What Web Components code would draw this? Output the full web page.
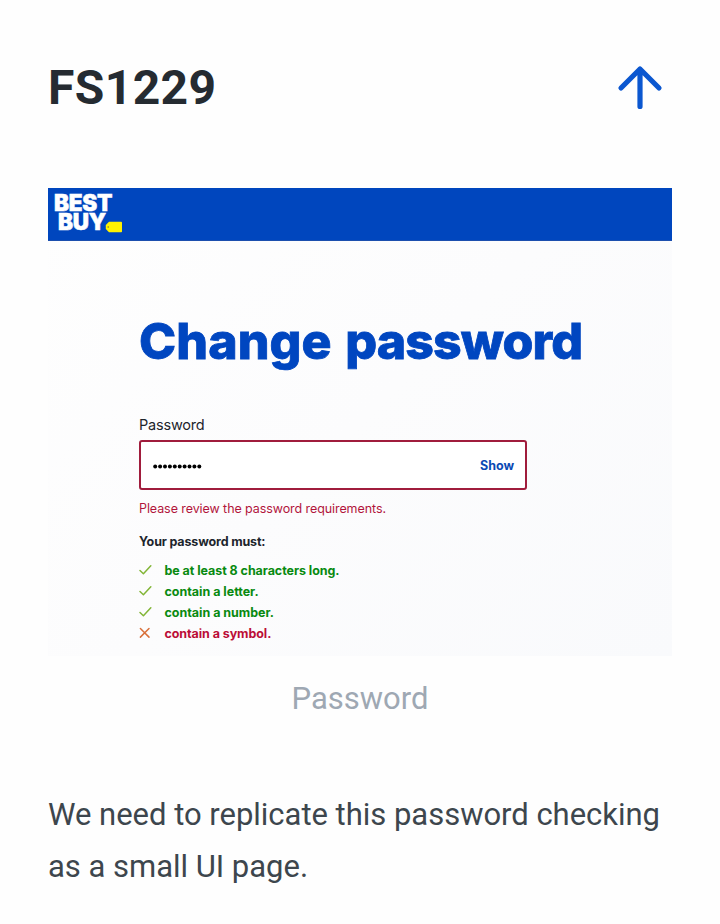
<!DOCTYPE html>
<html lang="en">
<head>
<meta charset="utf-8">
<title>FS1229</title>
<style>
body{margin:0;background:#fefefe;font-family:Roboto,"Liberation Sans",sans-serif}
</style>
</head>
<body>
<ticket-page>
  <ticket-header slot="header">FS1229</ticket-header>
  <brand-shot slot="figure">
    <password-form>
      <rule-item state="ok" style="--ls:-.06px">be at least 8 characters long.</rule-item>
      <rule-item state="ok">contain a letter.</rule-item>
      <rule-item state="ok">contain a number.</rule-item>
      <rule-item state="bad" style="--ls:-.08px">contain a symbol.</rule-item>
    </password-form>
  </brand-shot>
  <span slot="caption">Password</span>
  <span slot="text">We need to replicate this password checking as a small UI page.</span>
</ticket-page>
<script>
const define=(name,html)=>customElements.define(name,class extends HTMLElement{
  constructor(){super();this.attachShadow({mode:'open'}).innerHTML=html;}
});

define('ticket-page',`<style>
:host{display:flex;flex-direction:column;box-sizing:border-box;width:720px;height:924px;padding:0 48px;overflow:hidden}
.cap{margin-top:17px;height:52px;line-height:52px;font-size:31px;text-align:center;color:#9ea8b3}
p{margin:64px 0 0;font-size:31px;line-height:52px;color:#3d464d;letter-spacing:-.02px}
</style><slot name="header"></slot><slot name="figure"></slot><div class="cap"><slot name="caption"></slot></div><p><slot name="text"></slot></p>`);

define('ticket-header',`<style>
:host{display:flex;justify-content:space-between;align-items:center;height:176px;margin-bottom:12px;color:#252b31}
h1{margin:0;font-size:48px;line-height:56px;font-weight:700;letter-spacing:.4px}
svg{display:block;margin-right:8px}
</style><h1><slot></slot></h1>
<svg width="48" height="48" viewBox="0 0 48 48" fill="none" stroke="#0b57d0" stroke-width="5.200" stroke-linecap="round" stroke-linejoin="round"><path d="M24 42.500V5M5 24 24 5 43 24"/></svg>`);

define('brand-logo',`<style>
:host{display:flex;align-items:flex-start;height:44px;font:900 22.500px/18.500px Inter,sans-serif;color:#fff}
b{font-weight:900;white-space:pre;letter-spacing:-.3px;-webkit-text-stroke:.5px #fff}
i{display:inline-block;width:4px}
svg{display:block;margin:27px 0 0 -7px}
</style><b>BEST<br><i></i>BUY</b>
<svg width="18" height="12" viewBox="0 0 18 12"><path fill="#fff200" d="M4 .8H16.200Q17 .8 17 1.600V10.400Q17 11.200 16.200 11.200H4L.8 8V4Z"/><circle cx="3.200" cy="6" r=".8" fill="#746f45"/></svg>`);

define('brand-shot',`<style>
:host{display:block;height:468px;background:linear-gradient(135deg,#fefefe 0%,#fcfcfd 50%,#f9fafc 100%);font-family:Inter,sans-serif}
header{display:flex;box-sizing:border-box;height:53px;padding:6px 0 0 6px;background:#0046be;border-bottom:1px solid #1c4fae}
main{padding:70px 0 0 91px}
h2{margin:0;font-size:50px;line-height:60px;font-weight:800;color:#0046c0;letter-spacing:.1px;word-spacing:2.500px;white-space:nowrap;-webkit-text-stroke:.8px #0046c0}
h2 span{letter-spacing:-.9px}
</style><header><brand-logo></brand-logo></header><main><h2>Change <span>password</span></h2><slot></slot></main>`);

define('password-form',`<style>
:host{display:block;margin-top:44px;color:#1d252c;white-space:nowrap}
label{display:block;font-size:14.500px;line-height:20px;letter-spacing:-.2px}
.field{display:flex;align-items:center;justify-content:space-between;box-sizing:border-box;width:388px;height:50px;margin-top:5px;padding:0 11px 0 12px;border:2px solid #a01c3c;border-radius:3px;background:#fff}
.dots{display:block;margin-top:2px}
.show{font-size:12.500px;font-weight:700;color:#0a4ab4;margin-top:1px;letter-spacing:-.05px}
.error{margin-top:10px;font-size:12.500px;line-height:18px;color:#b2153c;letter-spacing:-.08px}
.must{margin:15px 0 9px;font-size:12.500px;line-height:18px;font-weight:700;letter-spacing:-.15px}
</style><label>Password</label>
<div class="field"><svg class="dots" width="49" height="5" viewBox="0 0 49 5">${Array.from({length:10},(_,i)=>`<circle cx="${2.200+i*4.900}" cy="2.500" r="2"/>`).join('')}</svg><span class="show">Show</span></div>
<div class="error">Please review the password requirements.</div>
<div class="must">Your password must:</div><slot></slot>`);

define('rule-item',`<style>
:host{display:flex;align-items:center;height:21px;gap:11.500px;font-size:12.500px;line-height:21px;font-weight:700;color:#088a10;letter-spacing:var(--ls,-.02px)}
:host([state=bad]){color:#bb0d37}
svg{display:block;fill:none;stroke-width:1.500;stroke-linecap:round;stroke-linejoin:round;margin-top:-1px}
.ok{stroke:#82b536}.bad{stroke:#d9703a;display:none}
:host([state=bad]) .ok{display:none}:host([state=bad]) .bad{display:block}
</style><svg class="ok" width="14" height="14" viewBox="0 0 14 14"><path d="M1 7.500 4.400 10.700 11.800 2.800"/></svg>
<svg class="bad" width="14" height="14" viewBox="0 0 14 14"><path d="M1.400 2.500 10 11.100M10 2.500 1.400 11.100"/></svg><span><slot></slot></span>`);
</script>
</body>
</html>
